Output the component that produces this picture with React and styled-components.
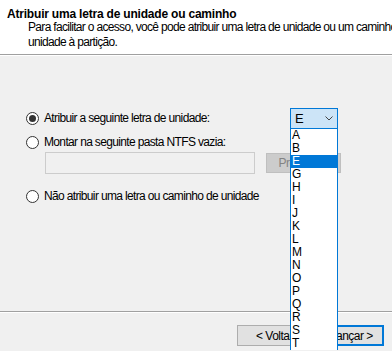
import React from 'react';
import styled, { createGlobalStyle } from 'styled-components';

const GlobalStyle = createGlobalStyle`
    html, body {
        margin:0;
        padding:0;
        overflow:hidden;
    }
    body {
        font-family:"Liberation Sans", Arial, sans-serif;
        font-size:12px;
        color:#000;
        background:#f0f0f0;
    }
`;

const LETTERS = ['A','B','E','G','H','I','J','K','L','M','N','O','P','Q','R','S','T'];

/* Wizard window */
const Wizard = styled.div`
    width:392px;
    height:351px;
    display:flex;
    flex-direction:column;
    overflow:hidden;
    background:#f0f0f0;
`;

/* Header */
const Header = styled.header`
    flex:none;
    background:#fff;
    border-bottom:1px solid #a0a0a0;
    box-shadow:0 1px 0 #fff;
    padding-top:7px;
    box-sizing:border-box;
    height:55px;
    white-space:nowrap;
    overflow:hidden;
`;
const Title = styled.h1`
    margin:0 0 0 7px;
    font-size:12px;
    line-height:15px;
    font-weight:bold;
    letter-spacing:-0.2px;
`;
const Desc = styled.p`
    margin:-2px 0 0 28px;
    line-height:15px;
    letter-spacing:-0.68px;
`;

/* Body */
const Body = styled.main`
    flex:1;
    display:flex;
    flex-direction:column;
    margin-top:1px;
`;
const Options = styled.section`
    flex:1;
    padding:52px 0 0 26px;
`;
const OptionRow = styled.div`
    display:flex;
    align-items:center;
    width:312px;
    height:${p => p.$h || 13}px;
    margin-top:${p => p.$mt || 0}px;
    justify-content:space-between;
`;
const RadioLabel = styled.label`
    display:flex;
    align-items:center;
    gap:5px;
    letter-spacing:-0.65px;
    line-height:13px;
`;
const RadioCircle = styled.span`
    width:13px;
    height:13px;
    box-sizing:border-box;
    border:1px solid #333;
    border-radius:50%;
    background:#fff;
    display:flex;
    align-items:center;
    justify-content:center;
    flex:none;
    &::after {
        content:'';
        width:7px;
        height:7px;
        border-radius:50%;
        background:${p => p.$checked ? '#333' : 'transparent'};
    }
`;

const PathRow = styled.div`
    display:flex;
    align-items:center;
    gap:11px;
    margin:3px 0 0 19px;
    height:22px;
`;
const PathInput = styled.div`
    width:210px;
    height:22px;
    box-sizing:border-box;
    border:1px solid #ccc;
    background:#f0f0f0;
`;
const DisabledButton = styled.div`
    width:75px;
    height:20px;
    box-sizing:border-box;
    border:1px solid #bfbfbf;
    background:#cccccc;
    color:#838383;
    display:flex;
    align-items:center;
    justify-content:center;
    letter-spacing:-0.5px;
`;

/* Combo box with its open list */
const Combo = styled.div`
    position:relative;
    width:48px;
    height:21px;
    box-sizing:border-box;
    border:1px solid #0078d7;
    background:#cce4f7;
    display:flex;
    align-items:center;
    justify-content:space-between;
    padding:0 4px 0 4px;
    font-size:13px;
`;
const DropList = styled.ul`
    position:absolute;
    top:100%;
    left:-1px;
    width:48px;
    box-sizing:border-box;
    margin:0;
    padding:0;
    list-style:none;
    background:#fff;
    border:1px solid #0078d7;
    border-bottom:none;
    z-index:2;
`;
const DropItem = styled.li`
    height:13px;
    line-height:13px;
    padding-left:1px;
    font-size:12px;
    background:${p => p.$active ? '#0078d7' : 'transparent'};
    color:${p => p.$active ? '#fff' : '#000'};
`;

/* Footer */
const Separator = styled.div`
    height:1px;
    background:#a0a0a0;
    box-shadow:0 1px 0 #fff;
    flex:none;
`;
const ButtonBar = styled.footer`
    display:flex;
    justify-content:flex-end;
    padding:13px 8px 5px 0;
`;
const WizardButton = styled.div`
    width:${p => p.$w}px;
    height:21px;
    box-sizing:border-box;
    border:${p => p.$primary ? '2px solid #0078d7' : '1px solid #adadad'};
    background:#e1e1e1;
    display:flex;
    align-items:center;
    justify-content:center;
    letter-spacing:-0.5px;
`;

const Chevron = () => (
    <svg width="8" height="5" viewBox="0 0 8 5">
        <polyline points="0.5,0.5 4,4 7.5,0.5" fill="none" stroke="#444" strokeWidth="1"/>
    </svg>
);

const Radio = ({checked, children}) => (
    <RadioLabel>
        <RadioCircle $checked={checked}/>
        {children}
    </RadioLabel>
);

export default function App(){
    return(
        <Wizard>
            <GlobalStyle/>
            <Header>
                <Title>Atribuir uma letra de unidade ou caminho</Title>
                <Desc>
                    Para facilitar o acesso, você pode atribuir uma letra de unidade ou um caminho de<br/>
                    unidade à partição.
                </Desc>
            </Header>
            <Body>
                <Options>
                    <OptionRow $h={21}>
                        <Radio checked>Atribuir a seguinte letra de unidade:</Radio>
                        <Combo>
                            <span>E</span>
                            <Chevron/>
                            <DropList>
                                {LETTERS.map(l => (
                                    <DropItem key={l} $active={l === 'E'}>{l}</DropItem>
                                ))}
                            </DropList>
                        </Combo>
                    </OptionRow>
                    <OptionRow $mt={7}>
                        <Radio>Montar na seguinte pasta NTFS vazia:</Radio>
                    </OptionRow>
                    <PathRow>
                        <PathInput/>
                        <DisabledButton>Procurar...</DisabledButton>
                    </PathRow>
                    <OptionRow $mt={16}>
                        <Radio>Não atribuir uma letra ou caminho de unidade</Radio>
                    </OptionRow>
                </Options>
                <Separator/>
                <ButtonBar>
                    <WizardButton $w={75}>&lt; Voltar</WizardButton>
                    <WizardButton $w={72} $primary>Avançar &gt;</WizardButton>
                </ButtonBar>
            </Body>
        </Wizard>
    )
}
